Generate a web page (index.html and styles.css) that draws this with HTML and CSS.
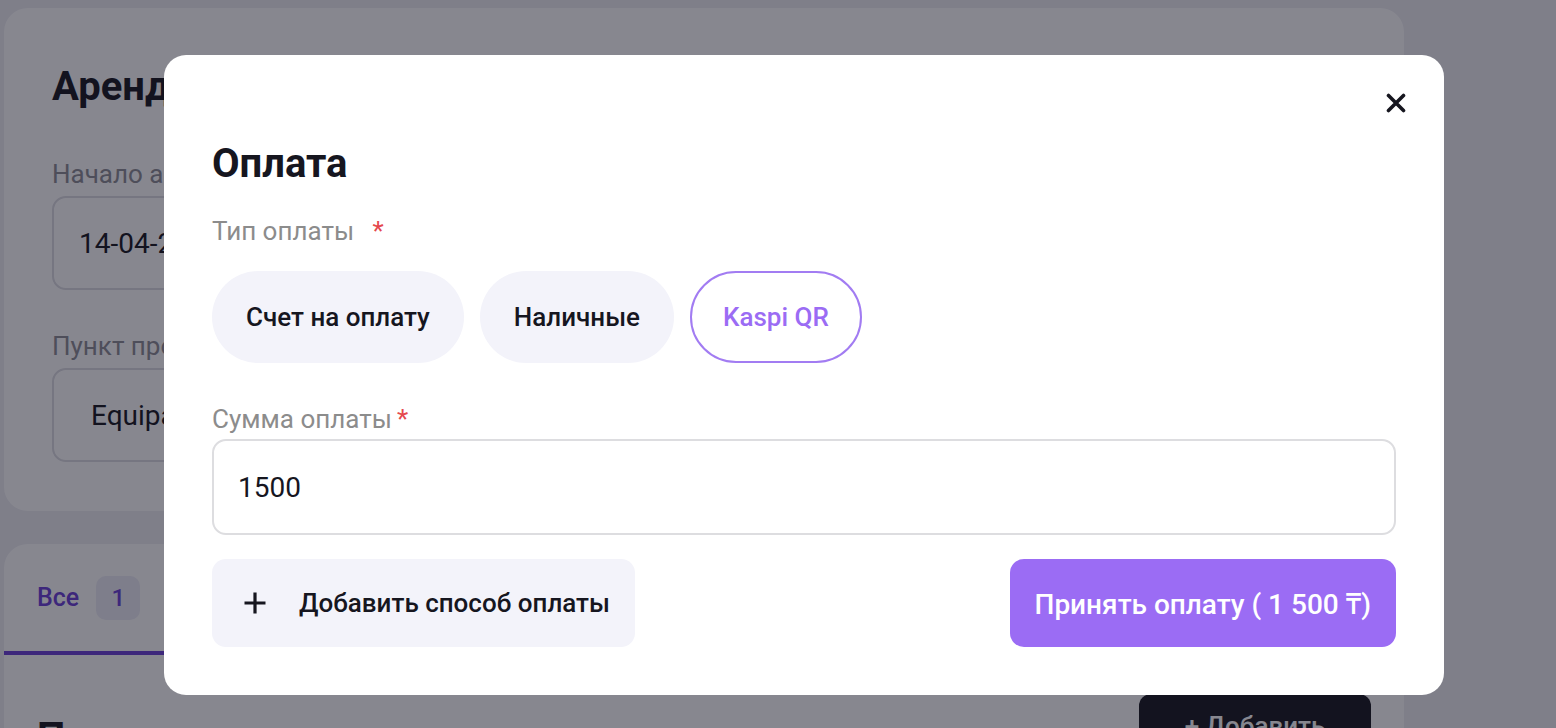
FILE: index.html
```html
<!DOCTYPE html>
<html lang="ru">
<head>
<meta charset="utf-8">
<title>Оплата</title>
<link rel="stylesheet" href="styles.css">
</head>
<body>
<div class="page">
  <section class="card card-rent">
    <h1 class="card-title">Аренда</h1>
    <div class="field">
      <div class="field-label">Начало аренды</div>
      <div class="field-input">14-04-2025 10:00</div>
    </div>
    <div class="field field-second">
      <div class="field-label">Пункт проката</div>
      <div class="field-input field-input-wide">Equipa Almaty</div>
    </div>
  </section>
  <section class="card card-products">
    <div class="tabs">
      <div class="tab tab-active">Все <span class="tab-badge">1</span></div>
    </div>
    <div class="products-head">
      <h2 class="products-title">Продукты</h2>
      <button class="dark-btn">+ Добавить</button>
    </div>
  </section>
</div>

<div class="overlay"></div>

<div class="modal">
  <button class="modal-close" aria-label="Закрыть">
    <svg width="20" height="20" viewBox="0 0 20 20"><path d="M2.5 2.5L17.5 17.5M17.5 2.5L2.5 17.5" stroke="#16161f" stroke-width="3.6" stroke-linecap="round" fill="none"/></svg>
  </button>
  <h2 class="modal-title">Оплата</h2>
  <div class="label label-type">Тип оплаты <span class="req req-spaced">*</span></div>
  <div class="chips">
    <button class="chip">Счет на оплату</button>
    <button class="chip">Наличные</button>
    <button class="chip chip-active">Kaspi QR</button>
  </div>
  <div class="label label-sum">Сумма оплаты<span class="req">*</span></div>
  <div class="amount-input">1500</div>
  <div class="actions">
    <button class="add-btn">
      <svg width="24" height="24" viewBox="0 0 24 24"><path d="M12 1.5V22.5M1.5 12H22.5" stroke="#16161f" stroke-width="3.2" fill="none"/></svg>
      <span>Добавить способ оплаты</span>
    </button>
    <button class="pay-btn">Принять оплату ( 1 500 ₸)</button>
  </div>
</div>
</body>
</html>
```

FILE: styles.css
```css
* { box-sizing: border-box; }

html, body {
  margin: 0;
  padding: 0;
  width: 1556px;
  height: 728px;
  overflow: hidden;
}

body {
  background: #eeeef3;
  font-family: Roboto, "Noto Sans", "Liberation Sans", sans-serif;
  color: #16161f;
}

button {
  font-family: inherit;
  border: none;
  cursor: pointer;
}

.page {
  width: 1400px;
  margin-left: 4px;
  padding-top: 8px;
  display: flex;
  flex-direction: column;
  gap: 33px;
}

.card {
  background: #fff;
  border-radius: 24px;
}

.card-rent {
  padding: 57px 48px 49px;
}

.card-title {
  margin: 0;
  font-size: 40px;
  line-height: 44px;
  font-weight: 700;
}

.field {
  margin-top: 51px;
  display: flex;
  flex-direction: column;
  gap: 8px;
}

.field-second {
  margin-top: 42px;
}

.field-label {
  font-size: 26px;
  line-height: 28px;
  color: #8c8c94;
}

.field-input {
  width: 620px;
  height: 94px;
  border: 2px solid #dcdce2;
  border-radius: 14px;
  padding-left: 25px;
  display: flex;
  align-items: center;
  font-size: 28px;
  color: #16161f;
}

.field-input-wide {
  padding-left: 37px;
}

.card-products {
  height: 400px;
}

.tabs {
  display: flex;
}

.tab {
  height: 111px;
  display: flex;
  align-items: center;
  gap: 17px;
  padding: 0 40px 0 33px;
  font-size: 25px;
  font-weight: 500;
  border-bottom: 4px solid #6a3fd6;
}

.tab-active {
  color: #6a3fd6;
}

.tab-badge {
  width: 44px;
  height: 44px;
  border-radius: 10px;
  background: #ececf6;
  display: flex;
  align-items: center;
  justify-content: center;
  font-size: 24px;
}

.products-head {
  display: flex;
  justify-content: space-between;
  align-items: flex-start;
  padding: 39px 33px 0 33px;
}

.products-title {
  margin: 22px 0 0;
  font-size: 40px;
  line-height: 44px;
  font-weight: 700;
}

.dark-btn {
  width: 232px;
  height: 64px;
  border-radius: 12px;
  background: #16161f;
  color: #fff;
  font-size: 26px;
  font-weight: 500;
}

.overlay {
  position: fixed;
  inset: 0;
  background: rgba(16, 16, 32, 0.5);
}

.modal {
  position: fixed;
  top: 55px;
  left: 164px;
  width: 1280px;
  height: 640px;
  background: #fff;
  border-radius: 22px;
  padding: 48px;
  display: flex;
  flex-direction: column;
  align-items: flex-start;
}

.modal-close {
  position: absolute;
  top: 38px;
  right: 38px;
  width: 20px;
  height: 20px;
  padding: 0;
  background: none;
  display: flex;
}

.modal-title {
  margin: 39px 0 0;
  font-size: 40px;
  line-height: 44px;
  font-weight: 700;
  color: #16161f;
}

.label {
  font-size: 26px;
  line-height: 28px;
  color: #8c8c8c;
}

.label-type {
  margin-top: 31px;
}

.req {
  color: #e5484d;
  margin-left: 6px;
}

.req-spaced {
  margin-left: 12px;
}

.chips {
  margin-top: 26px;
  display: flex;
  gap: 16px;
}

.chip {
  height: 92px;
  padding: 0 34px;
  border-radius: 46px;
  background: #f3f3fa;
  font-size: 26px;
  font-weight: 500;
  color: #16161f;
}

.chip-active {
  background: #fff;
  border: 2px solid #a27cf2;
  padding: 0 31px;
  color: #9b6cf4;
}

.label-sum {
  margin-top: 42px;
}

.label-sum .req {
  margin-left: 5px;
}

.amount-input {
  margin-top: 6px;
  width: 100%;
  height: 96px;
  border: 2px solid #dddde0;
  border-radius: 14px;
  padding-left: 24px;
  display: flex;
  align-items: center;
  font-size: 28px;
  color: #16161f;
}

.actions {
  margin-top: 24px;
  width: 100%;
  display: flex;
  justify-content: space-between;
}

.add-btn {
  height: 88px;
  padding: 0 25px 0 31px;
  border-radius: 14px;
  background: #f3f3fa;
  display: flex;
  align-items: center;
  gap: 32px;
  font-size: 26px;
  font-weight: 500;
  color: #16161f;
}

.pay-btn {
  height: 88px;
  padding: 0 25px;
  border-radius: 14px;
  background: #9b6cf4;
  color: #fff;
  font-size: 28px;
  font-weight: 500;
}
```
